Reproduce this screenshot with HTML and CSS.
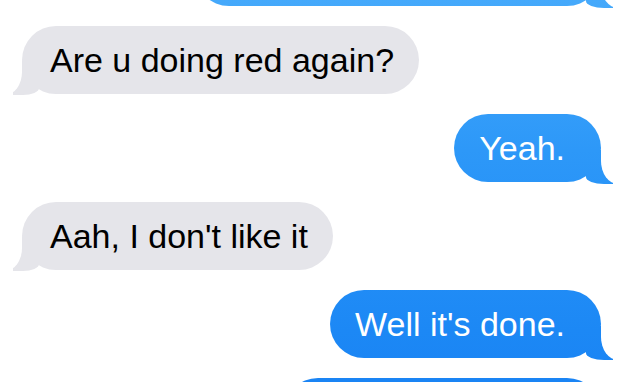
FILE: index.html
```html
<!DOCTYPE html>
<html lang="en">
<head>
<meta charset="utf-8">
<title>Messages</title>
<link rel="stylesheet" href="styles.css">
</head>
<body>
<div class="thread">
  <div class="bubble sent cut-top"></div>
  <div class="bubble received">Are u doing red again?</div>
  <div class="bubble sent">Yeah.</div>
  <div class="bubble received">Aah, I don't like it</div>
  <div class="bubble sent">Well it's done.</div>
  <div class="bubble sent cut-bottom"></div>
</div>
</body>
</html>
```
FILE: styles.css
```css
html, body {
  margin: 0;
  padding: 0;
  background: #ffffff;
  overflow: hidden;
}

body {
  width: 619px;
  height: 382px;
  font-family: "Liberation Sans", Arial, sans-serif;
}

.thread {
  display: flex;
  flex-direction: column;
  gap: 20px;
  margin-top: -62px;
  height: 444px;
  overflow: hidden;
}

.bubble {
  position: relative;
  box-sizing: border-box;
  height: 68px;
  flex: none;
  padding: 14px 0;
  font-size: 34px;
  line-height: 40px;
  border-radius: 34px;
  white-space: nowrap;
}

.bubble::before,
.bubble::after {
  content: "";
  position: absolute;
  height: 34px;
}

/* incoming (grey) */
.received {
  align-self: flex-start;
  margin-left: 22px;
  padding-left: 28px;
  padding-right: 25px;
  background: #e5e5ea;
  color: #000000;
}

.received::before {
  z-index: 0;
  left: -9px;
  bottom: -1px;
  width: 26px;
  background: #e5e5ea;
  border-bottom-right-radius: 16px 7px;
}

.received::after {
  z-index: 1;
  left: -18px;
  bottom: -1px;
  width: 18px;
  background: #ffffff;
  border-bottom-right-radius: 17px 23px;
}

/* outgoing (blue) */
.sent {
  align-self: flex-end;
  margin-right: 18px;
  padding-left: 25px;
  padding-right: 36px;
  color: #ffffff;
  background: linear-gradient(to bottom, #45a9fb 0px, #2d98f8 150px, #1c88f5 330px, #1a84f4 382px) fixed;
}

.sent::before {
  z-index: 0;
  right: -12px;
  bottom: -2px;
  width: 27px;
  background: linear-gradient(to bottom, #45a9fb 0px, #2d98f8 150px, #1c88f5 330px, #1a84f4 382px) fixed;
  border-bottom-left-radius: 18px 7px;
}

.sent::after {
  z-index: 1;
  right: -17px;
  bottom: -2px;
  width: 17px;
  background: #ffffff;
  border-bottom-left-radius: 17px 23px;
}

.cut-top {
  width: 406px;
}

.cut-bottom {
  width: 317px;
}
```
